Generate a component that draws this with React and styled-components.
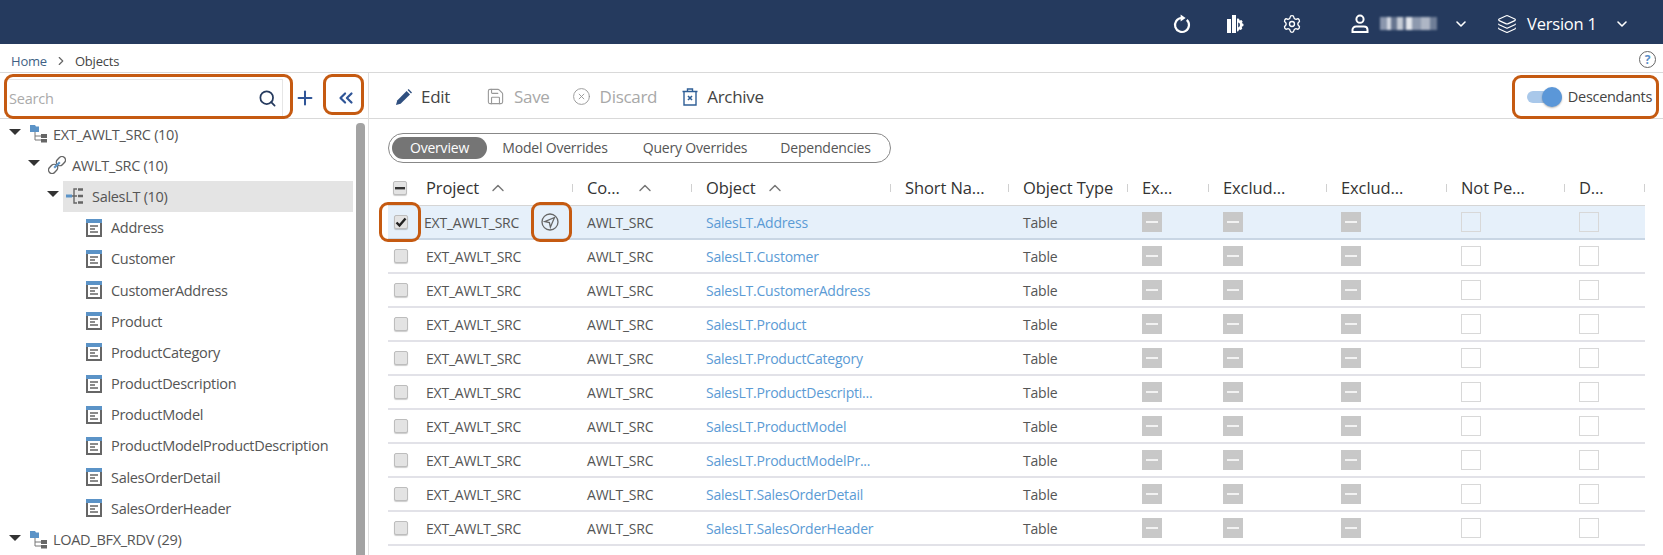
import React from 'react'
import styled, { createGlobalStyle } from 'styled-components'
import { Settings, Layers, ChevronDown, ChevronRight, ChevronUp, Search, Plus, ChevronsLeft, Save, CircleX } from 'lucide-react'

const GlobalStyle = createGlobalStyle`
  html, body { margin: 0; padding: 0; background: #fff; }
  body { font-family: "Open Sans", "Noto Sans", "Liberation Sans", sans-serif; color: #444; }
`

const Page = styled.div`
  position: relative;
  width: 1663px;
  height: 555px;
  overflow: hidden;
`
const TopBar = styled.header`
  height: 44px;
  box-sizing: border-box;
  padding: 3px 0 0 1172px;
  background: #253a5e;
  display: flex;
  align-items: center;
  color: #fff;
`
const TopItem = styled.div`
  display: flex;
  align-items: center;
  margin-left: ${p => p.$gap || 0}px;
`
const Blurred = styled.div`
  width: 57px;
  height: 13px;
  filter: blur(1px);
  background: linear-gradient(90deg, #8b97ad 0 12%, #d4d9e2 12% 20%, #66758f 20% 30%, #c6ccd6 30% 40%, #5c6b87 40% 46%, #e3e6eb 46% 56%, #8d99ae 56% 72%, #aeb6c5 72% 88%, #6f7e97 88% 100%);
`
const VersionLabel = styled.span`
  font-size: 16.5px;
  letter-spacing: -0.2px;
  margin-left: 10px;
`
const Crumbs = styled.nav`
  height: 29px;
  box-sizing: border-box;
  border-bottom: 1px solid #d9d9d9;
  display: flex;
  align-items: center;
  padding: 6px 0 0 11px;
  font-size: 13px;
  letter-spacing: -0.2px;
  position: relative;
`
const CrumbLink = styled.span`
  color: #3f5f85;
`
const CrumbCurrent = styled.span`
  color: #444;
  margin-left: 7px;
`
const HelpIcon = styled.span`
  position: absolute;
  right: 7px;
  top: 7px;
  width: 15px;
  height: 15px;
  border: 1.5px solid #666;
  border-radius: 50%;
  color: #5b8fc7;
  font-size: 12px;
  font-weight: 700;
  display: flex;
  align-items: center;
  justify-content: center;
`
const Body = styled.div`
  display: flex;
  height: 482px;
`
const Sidebar = styled.aside`
  width: 369px;
  box-sizing: border-box;
  border-right: 1px solid #e0e0e0;
  flex: none;
  display: flex;
  flex-direction: column;
`
const SearchRow = styled.div`
  border-bottom: 1px solid #d9d9d9;
  display: flex;
  align-items: center;
  padding: 4px 0 0 6px;
  box-sizing: border-box;
  height: 46px;
  color: #2f5597;
`
const SearchBox = styled.div`
  width: 277px;
  height: 38px;
  box-sizing: border-box;
  border: 1px solid #e6e6e6;
  display: flex;
  align-items: center;
  padding: 2px 5px 0 0;
  color: #253a5e;
`
const SearchInput = styled.input`
  flex: 1;
  min-width: 0;
  border: 0;
  outline: 0;
  padding: 0 0 0 2px;
  font: 14.5px "Open Sans", sans-serif;
  letter-spacing: -0.2px;
  &::placeholder { color: #aaa; }
`
const SideIcon = styled.span`
  display: flex;
  margin-left: ${p => p.$gap}px;
`
const TreeArea = styled.div`
  flex: 1;
  display: flex;
  min-height: 0;
`
const Tree = styled.ul`
  width: 353px;
  margin: -0.5px 0 0;
  padding: 0;
  list-style: none;
`
const TreeRow = styled.li`
  height: 31.2px;
  display: flex;
  align-items: center;
  padding-left: ${p => p.$indent}px;
  font-size: 14.5px;
  letter-spacing: -0.3px;
  color: #555;
  white-space: nowrap;
`
const Caret = styled.span`
  width: 0;
  height: 0;
  border-left: 6px solid transparent;
  border-right: 6px solid transparent;
  border-top: 6px solid #333;
  margin: -4px ${p => p.$gap}px 0 0;
`
const NodeLabel = styled.span`
  display: flex;
  align-items: center;
  flex: 1;
  height: 31px;
  gap: ${p => p.$gap}px;
  padding-left: 3px;
  background: ${p => (p.$selected ? '#e4e4e4' : 'transparent')};
`
const Scrollbar = styled.div`
  width: 9px;
  margin: 4px 0 0 3px;
  background: #a3a3a3;
  border-radius: 4px 4px 0 0;
`
const Main = styled.main`
  flex: 1;
  min-width: 0;
`
const Toolbar = styled.div`
  height: 46px;
  box-sizing: border-box;
  border-bottom: 1px solid #d9d9d9;
  display: flex;
  align-items: center;
  padding: 2px 0 0 27px;
`
const ToolButton = styled.span`
  display: flex;
  align-items: center;
  gap: 9px;
  font-size: 17px;
  letter-spacing: -0.3px;
  color: ${p => (p.$disabled ? '#a8a8a8' : '#444')};
  margin-right: ${p => p.$gap}px;
`
const DescendantsToggle = styled.div`
  margin-left: auto;
  display: flex;
  align-items: center;
  margin-right: 11px;
  font-size: 14.5px;
  letter-spacing: -0.3px;
  color: #444;
  gap: 6px;
`
const Track = styled.span`
  position: relative;
  display: block;
  width: 35px;
  height: 12px;
  border-radius: 6px;
  background: #a9c8ea;
  &::after {
    content: '';
    position: absolute;
    right: 0;
    top: -4px;
    width: 20px;
    height: 20px;
    border-radius: 50%;
    background: #5b97d8;
    box-shadow: 0 1px 2px rgba(0,0,0,.3);
  }
`
const Tabs = styled.div`
  margin: 14px 0 7px 19px;
  width: 503px;
  height: 30px;
  box-sizing: border-box;
  border: 1px solid #888;
  border-radius: 15px;
  display: flex;
  align-items: center;
  padding-left: 3px;
`
const Tab = styled.span`
  font-size: 14px;
  letter-spacing: -0.2px;
  color: ${p => (p.$active ? '#fff' : '#555')};
  background: ${p => (p.$active ? '#757575' : 'transparent')};
  border-radius: 11px;
  height: 22px;
  line-height: 22px;
  text-align: center;
  width: ${p => p.$w}px;
  margin-right: ${p => p.$gap}px;
`
const columns = '24px 161px 119px 199px 118px 119px 81px 118px 120px 118px 80px'
const Table = styled.div`
  margin-left: 19px;
  width: 1257px;
`
const HeadRow = styled.div`
  display: grid;
  grid-template-columns: ${columns};
  height: 36px;
  box-sizing: border-box;
  border-bottom: 1px solid #d5d5d5;
  align-items: center;
`
const HeadCell = styled.div`
  display: flex;
  align-items: center;
  height: 14px;
  padding-left: 14px;
  font-size: 16.5px;
  font-weight: 500;
  letter-spacing: -0.1px;
  color: #333;
  white-space: nowrap;
  position: relative;
  &::after {
    content: '';
    position: absolute;
    right: 0;
    top: 3px;
    height: 8px;
    border-right: 1px solid #d0d0d0;
  }
`
const SortIcon = styled.span`
  display: flex;
  margin-left: ${p => p.$gap}px;
  color: #777;
`
const Row = styled.div`
  display: grid;
  grid-template-columns: ${columns};
  height: 34px;
  box-sizing: border-box;
  border-bottom: 2px solid ${p => (p.$selected ? '#c9d6e4' : '#e2e2e8')};
  background: ${p => (p.$selected ? '#e6f0fa' : '#fff')};
  align-items: center;
  font-size: 14px;
  letter-spacing: -0.22px;
  color: #555;
`
const Cell = styled.div`
  padding-left: ${p => p.$left ?? 14}px;
  white-space: nowrap;
  display: flex;
  align-items: center;
  justify-content: ${p => (p.$between ? 'space-between' : 'flex-start')};
`
const ObjectLink = styled.span`
  color: #5b9bd5;
`
const Check = styled.span`
  width: 14px;
  height: 14px;
  margin-left: ${p => p.$left ?? 6}px;
  box-sizing: border-box;
  border-radius: 2px;
  border: 1px solid #bdbdbd;
  background: #e3e3e3;
  box-shadow: 0 1px 1px rgba(0,0,0,.2);
  display: flex;
  align-items: center;
  justify-content: center;
  color: #222;
`
const FlagBox = styled.span`
  display: flex;
  align-items: center;
  justify-content: center;
  width: 20px;
  height: 20px;
  box-sizing: border-box;
  background: ${p => (p.$mixed ? '#c8c8c8' : 'transparent')};
  border: 1px solid ${p => (p.$mixed ? '#c8c8c8' : '#d8d8d8')};
  &::after {
    content: '';
    display: ${p => (p.$mixed ? 'block' : 'none')};
    width: 12px;
    height: 2px;
    background: #f2f2f2;
  }
`
const NavSlot = styled.span`
  display: flex;
  margin-right: 14px;
`
const Marker = styled.div`
  position: absolute;
  left: ${p => p.$x}px;
  top: ${p => p.$y}px;
  width: ${p => p.$w}px;
  height: ${p => p.$h}px;
  box-sizing: border-box;
  border: 3px solid #c55a11;
  border-radius: 9px;
`

const RefreshIcon = () => (
  <svg width="20" height="20" viewBox="0 0 20 20" fill="none" stroke="#fff" strokeWidth="2.2">
    <path d="M14.8 5.9A7 7 0 1 1 9.5 4" />
    <path d="M8.6 0.6l5 3.4-5 3.4z" fill="#fff" stroke="none" />
  </svg>
)
const ChartGearIcon = () => (
  <svg width="20" height="20" viewBox="0 0 20 20" fill="#fff">
    <rect x="1" y="5" width="4" height="14" />
    <rect x="6" y="1" width="4" height="18" />
    <path fillRule="evenodd" d="M11 4.5l2 .2.7 1.8 1.7-.4 1.3 1.6-.9 1.4 1.7 1-.1 2-1.7.7.6 1.6-1.4 1.6-1.8-.4-.8 1.6-1.3.3zM12.2 8.6v4.8a2.5 2.5 0 0 0 0-4.8z" />
  </svg>
)
const UserIcon = () => (
  <svg width="20" height="20" viewBox="0 0 20 20" fill="none" stroke="#fff" strokeWidth="2">
    <circle cx="10" cy="5.2" r="3.6" />
    <path d="M2.5 18v-2.2c0-2 1.6-3.3 3.6-3.3h7.8c2 0 3.6 1.3 3.6 3.3V18z" />
  </svg>
)
const FolderTreeIcon = () => (
  <svg width="18" height="18" viewBox="0 0 18 18">
    <path d="M0 0h5l1 1.5h3V7H0z" fill="#5b93c7" />
    <path d="M5 7v8h6M5 11h6" stroke="#777" fill="none" />
    <rect x="11" y="9" width="6" height="4" fill="#666" />
    <rect x="11" y="14" width="6" height="3.5" fill="#666" />
  </svg>
)
const LinkNodeIcon = () => (
  <svg width="18" height="18" viewBox="0 0 18 18" fill="none" strokeWidth="1.4">
    <g stroke="#666" transform="rotate(-45 9 9)">
      <rect x="-1.5" y="5.5" width="10" height="7" rx="3.5" />
      <rect x="9.5" y="5.5" width="10" height="7" rx="3.5" />
    </g>
    <path d="M6.2 11.8l5.6-5.6" stroke="#5b93c7" strokeWidth="2.2" />
  </svg>
)
const SchemaIcon = () => (
  <svg width="18" height="16" viewBox="0 0 18 16" fill="none">
    <rect x="0" y="6.5" width="6" height="3" fill="#5b93c7" />
    <path d="M11 1H8v14h3M6 8h5" stroke="#666" strokeWidth="1.4" />
    <path d="M12 1.5h5M12 8h5M12 14.5h5" stroke="#666" strokeWidth="2.4" />
  </svg>
)
const TableIcon = () => (
  <svg width="16" height="18" viewBox="0 0 16 18" fill="none">
    <rect x="0" y="0" width="16" height="18" fill="#666" />
    <rect x="0" y="0" width="16" height="4" fill="#5b93c7" />
    <rect x="2" y="4" width="12" height="12" fill="#fff" />
    <path d="M4 7h8M4 10h5M4 13h8" stroke="#666" strokeWidth="1.3" />
  </svg>
)
const PencilIcon = () => (
  <svg width="16" height="16" viewBox="0 0 16 16" fill="#2f4f7f">
    <path d="M0 16l1.2-4.6L10.6 2l3.4 3.4-9.4 9.4z" />
    <path d="M11.6 1l1-1 3.4 3.4-1 1z" />
  </svg>
)
const ArchiveIcon = () => (
  <svg width="16" height="18" viewBox="0 0 16 18" fill="none" stroke="#2f5f97" strokeWidth="1.4">
    <path d="M0.5 3.5h15M5.5 3V1h5v2" />
    <path d="M2 3.5V17h12V3.5" />
    <path d="M6 8l4 4M10 8l-4 4" strokeWidth="1.6" />
  </svg>
)
const NavIcon = () => (
  <svg width="18" height="18" viewBox="0 0 18 18" fill="none" stroke="#666" strokeWidth="1.3">
    <circle cx="9" cy="9" r="8" />
    <path d="M13.5 4.5L3.8 8.6l4.6 1 1 4.6z" />
  </svg>
)
const TickIcon = () => (
  <svg width="12" height="12" viewBox="0 0 12 12" fill="none" stroke="#222" strokeWidth="2.4">
    <path d="M1.5 6.5l3 3 6-7" />
  </svg>
)
const MinusMark = () => (
  <svg width="10" height="4" viewBox="0 0 10 4"><rect width="10" height="2.4" y="1" fill="#333" /></svg>
)

const leaves = ['Address', 'Customer', 'CustomerAddress', 'Product', 'ProductCategory', 'ProductDescription', 'ProductModel', 'ProductModelProductDescription', 'SalesOrderDetail', 'SalesOrderHeader']
const objects = ['SalesLT.Address', 'SalesLT.Customer', 'SalesLT.CustomerAddress', 'SalesLT.Product', 'SalesLT.ProductCategory', 'SalesLT.ProductDescripti...', 'SalesLT.ProductModel', 'SalesLT.ProductModelPr...', 'SalesLT.SalesOrderDetail', 'SalesLT.SalesOrderHeader']
const plainHeads = ['Short Na...', 'Object Type', 'Ex...', 'Exclud...', 'Exclud...', 'Not Pe...', 'D...']

const App = () => {
  return (
    <Page>
      <GlobalStyle />
      <TopBar>
        <TopItem><RefreshIcon /></TopItem>
        <TopItem $gap={34}><ChartGearIcon /></TopItem>
        <TopItem $gap={36}><Settings size={20} strokeWidth={1.6} /></TopItem>
        <TopItem $gap={48}><UserIcon /></TopItem>
        <TopItem $gap={10}><Blurred /></TopItem>
        <TopItem $gap={16}><ChevronDown size={16} strokeWidth={2.4} /></TopItem>
        <TopItem $gap={28}><Layers size={20} strokeWidth={1.4} /><VersionLabel>Version 1</VersionLabel></TopItem>
        <TopItem $gap={17}><ChevronDown size={16} strokeWidth={2.4} /></TopItem>
      </TopBar>
      <Crumbs>
        <CrumbLink>Home</CrumbLink>
        <ChevronRight size={14} color="#666" style={{ marginLeft: 7 }} />
        <CrumbCurrent>Objects</CrumbCurrent>
        <HelpIcon>?</HelpIcon>
      </Crumbs>
      <Body>
        <Sidebar>
          <SearchRow>
            <SearchBox>
              <SearchInput placeholder="Search" readOnly />
              <Search size={19} strokeWidth={2.2} />
            </SearchBox>
            <SideIcon $gap={11}><Plus size={22} strokeWidth={2.2} /></SideIcon>
            <SideIcon $gap={19}><ChevronsLeft size={22} strokeWidth={2.4} /></SideIcon>
          </SearchRow>
          <TreeArea>
            <Tree>
              <TreeRow $indent={9}><Caret $gap={6} /><NodeLabel $gap={5}><FolderTreeIcon />EXT_AWLT_SRC (10)</NodeLabel></TreeRow>
              <TreeRow $indent={28}><Caret $gap={5} /><NodeLabel $gap={6}><LinkNodeIcon />AWLT_SRC (10)</NodeLabel></TreeRow>
              <TreeRow $indent={47}><Caret $gap={4} /><NodeLabel $gap={8} $selected><SchemaIcon />SalesLT (10)</NodeLabel></TreeRow>
              {leaves.map(name => (
                <TreeRow $indent={83} key={name}><NodeLabel $gap={9}><TableIcon />{name}</NodeLabel></TreeRow>
              ))}
              <TreeRow $indent={9}><Caret $gap={6} /><NodeLabel $gap={5}><FolderTreeIcon />LOAD_BFX_RDV (29)</NodeLabel></TreeRow>
            </Tree>
            <Scrollbar />
          </TreeArea>
        </Sidebar>
        <Main>
          <Toolbar>
            <ToolButton $gap={36}><PencilIcon />Edit</ToolButton>
            <ToolButton $gap={22} $disabled><Save size={19} strokeWidth={1.4} color="#999" />Save</ToolButton>
            <ToolButton $gap={25} $disabled><CircleX size={19} strokeWidth={1.2} color="#999" />Discard</ToolButton>
            <ToolButton><ArchiveIcon />Archive</ToolButton>
            <DescendantsToggle><Track />Descendants</DescendantsToggle>
          </Toolbar>
          <Tabs>
            <Tab $active $w={95} $gap={14}>Overview</Tab>
            <Tab $w={108} $gap={32}>Model Overrides</Tab>
            <Tab $w={108} $gap={30}>Query Overrides</Tab>
            <Tab $w={93} $gap={0}>Dependencies</Tab>
          </Tabs>
          <Table>
            <HeadRow>
              <Cell $left={5}><Check $left={0}><MinusMark /></Check></Cell>
              <HeadCell>Project<SortIcon $gap={9}><ChevronUp size={20} strokeWidth={1.7} /></SortIcon></HeadCell>
              <HeadCell>Co...<SortIcon $gap={15}><ChevronUp size={20} strokeWidth={1.7} /></SortIcon></HeadCell>
              <HeadCell>Object<SortIcon $gap={9}><ChevronUp size={20} strokeWidth={1.7} /></SortIcon></HeadCell>
              {plainHeads.map((h, i) => <HeadCell key={i}>{h}</HeadCell>)}
            </HeadRow>
            {objects.map((name, i) => (
              <Row key={name} $selected={i === 0}>
                <Cell $left={0}><Check>{i === 0 && <TickIcon />}</Check></Cell>
                <Cell $left={i === 0 ? 12 : 14} $between>
                  EXT_AWLT_SRC
                  {i === 0 && <NavSlot><NavIcon /></NavSlot>}
                </Cell>
                <Cell>AWLT_SRC</Cell>
                <Cell><ObjectLink>{name}</ObjectLink></Cell>
                <Cell />
                <Cell>Table</Cell>
                <Cell><FlagBox $mixed /></Cell>
                <Cell><FlagBox $mixed /></Cell>
                <Cell><FlagBox $mixed /></Cell>
                <Cell><FlagBox /></Cell>
                <Cell><FlagBox /></Cell>
              </Row>
            ))}
          </Table>
        </Main>
      </Body>
      <Marker $x={4} $y={74} $w={289} $h={45} />
      <Marker $x={323} $y={74} $w={41} $h={41} />
      <Marker $x={1512} $y={75} $w={147} $h={44} />
      <Marker $x={379} $y={202} $w={42} $h={40} />
      <Marker $x={531} $y={202} $w={41} $h={40} />
    </Page>
  )
}

export default App
